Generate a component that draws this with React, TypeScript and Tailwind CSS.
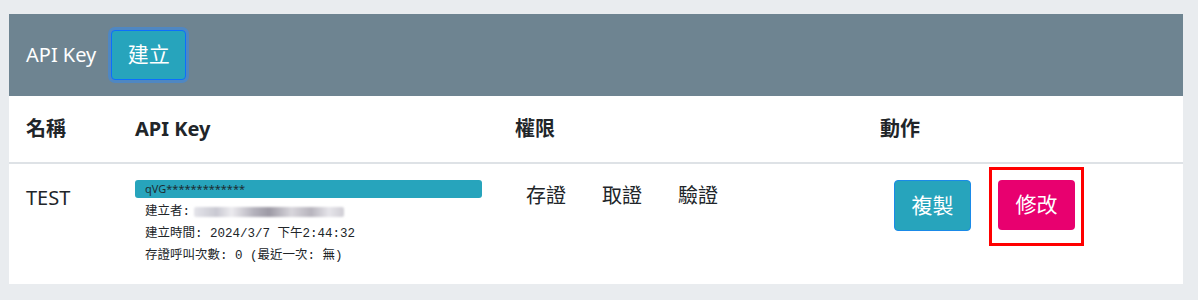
import React from "react";

const sans = { fontFamily: '"Noto Sans", "Noto Sans CJK TC", sans-serif' };
const mono = { fontFamily: '"Liberation Mono", "Noto Sans CJK TC", monospace' };

export default function App() {
  return (
    <div className="h-[300px] w-[1198px] bg-[#e9ecef] pl-[9px] pr-[15px] pt-[14px] pb-[16px]" style={sans}>
      <div className="flex h-full flex-col bg-white">
        {/* card header */}
        <div className="flex h-[82px] items-center bg-[#6e8491] pl-[17px]">
          <span className="text-[20px] leading-none text-white">API Key</span>
          <button className="ml-[15px] flex h-[50px] w-[75px] items-center justify-center rounded-[4px] border border-[#0d6efd] bg-[#27a4bc] text-[21px] text-white shadow-[0_0_0_3px_#4f87c2]">
            建立
          </button>
        </div>
        {/* table header */}
        <div className="grid h-[68px] grid-cols-[109px_380px_365px_1fr] items-center border-b-2 border-[#dee2e6] text-[20px] font-bold text-[#212529]">
          <div className="pl-[17px]">名稱</div>
          <div className="pl-[17px]">API Key</div>
          <div className="pl-[17px]">權限</div>
          <div className="pl-[17px]">動作</div>
        </div>
        {/* body row */}
        <div className="grid flex-1 grid-cols-[109px_380px_365px_1fr] pt-[16px] text-[#212529]">
          <div className="pl-[17px] pt-[3px] text-[20px] leading-[30px]">TEST</div>
          <div className="pl-[17px]">
            <div className="flex h-[18px] w-[347px] items-center rounded-[3px] bg-[#27a4bc] pl-[10px] text-[11px] text-[#1d2d33]">
              qVG*************
            </div>
            <div className="pl-[10px] pt-[3px] text-[12.5px] leading-[22px] text-[#212529]" style={mono}>
              <div className="flex items-center">
                <span>建立者: </span>
                <span className="ml-[4px] h-[10px] w-[150px] rounded-[2px] bg-[linear-gradient(90deg,#e4e4ea,#c9c9d2_15%,#ecebef_25%,#b4b2bc_40%,#9d9aa5_50%,#d8d6dc_65%,#b7b4bd_78%,#e6e5ea_90%,#cfcdd4)] blur-[1px]"></span>
              </div>
              <div>建立時間: 2024/3/7 下午2:44:32</div>
              <div>存證呼叫次數: 0 (最近一次: 無)</div>
            </div>
          </div>
          <div className="flex gap-[36px] pl-[28px] pt-[1px] text-[20px] leading-[30px]">
            <span>存證</span>
            <span>取證</span>
            <span>驗證</span>
          </div>
          <div className="flex items-start pl-[31px]">
            <button className="flex h-[51px] w-[77px] items-center justify-center rounded-[4px] border border-[#1a8ae8] bg-[#27a4bc] text-[21px] text-white">
              複製
            </button>
            <div className="relative ml-[27px]">
              <button className="flex h-[50px] w-[77px] items-center justify-center rounded-[4px] bg-[#e8006f] text-[21px] text-white">
                修改
              </button>
              <div className="pointer-events-none absolute -top-[13px] -bottom-[16px] -left-[9px] -right-[9px] border-[3px] border-[#ff0000]"></div>
            </div>
          </div>
        </div>
      </div>
    </div>
  );
}
